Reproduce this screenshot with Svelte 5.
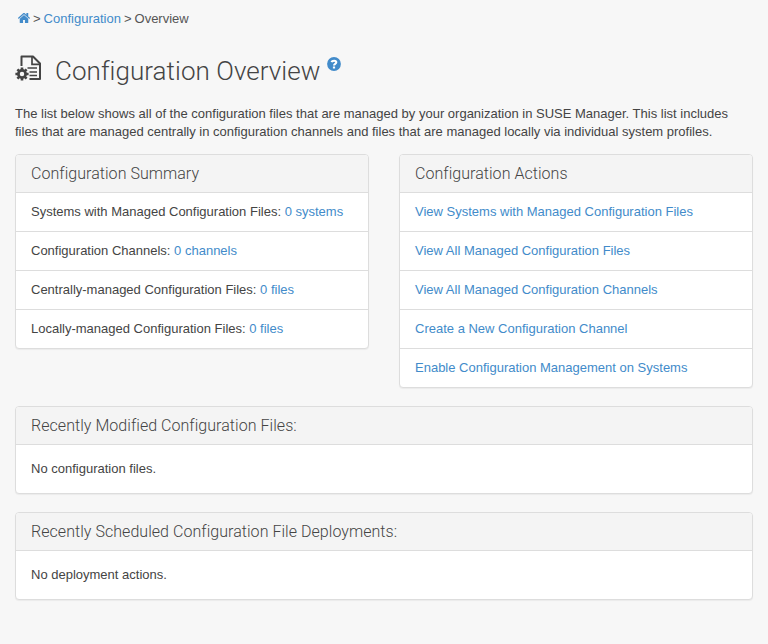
<script>
  const summary = [
    { label: 'Systems with Managed Configuration Files:', link: '0 systems' },
    { label: 'Configuration Channels:', link: '0 channels' },
    { label: 'Centrally-managed Configuration Files:', link: '0 files' },
    { label: 'Locally-managed Configuration Files:', link: '0 files' },
  ];
  const actions = [
    'View Systems with Managed Configuration Files',
    'View All Managed Configuration Files',
    'View All Managed Configuration Channels',
    'Create a New Configuration Channel',
    'Enable Configuration Management on Systems',
  ];
  const recent = [
    { title: 'Recently Modified Configuration Files:', body: 'No configuration files.' },
    { title: 'Recently Scheduled Configuration File Deployments:', body: 'No deployment actions.' },
  ];
</script>

<main>
  <nav>
    <a href="#home" aria-label="Home">
      <svg class="home" viewBox="20 40 1624 1260" width="12" height="10" preserveAspectRatio="none">
        <path fill="currentColor" d="M1408 768v480q0 26-19 45t-45 19H960V928H704v384H320q-26 0-45-19t-19-45V768L832 293zm223-69-62 74q-8 9-21 11h-3q-13 0-21-7L832 200 140 777q-12 8-24 7-13-2-21-11l-62-74q-8-10-7-23.500t11-21.500L756 55q32-26 76-26t76 26l244 204V64q0-14 9-23t23-9h192q14 0 23 9t9 23v408l219 182q10 8 11 21.500t-7 23.500z" />
      </svg>
    </a>
    <span>&gt;</span>
    <a href="#configuration">Configuration</a>
    <span>&gt;</span>
    <span>Overview</span>
  </nav>

  <h1>
    <svg class="doc" viewBox="0 0 27 26" width="27" height="26">
      <path fill="none" stroke="currentColor" stroke-width="2" stroke-linejoin="round" d="M6.500 11V1.500H18L25 8.500V23.900H14.500" />
      <path fill="none" stroke="currentColor" stroke-width="1.700" d="M17 1.500V9.300H25" />
      <path fill="none" stroke="currentColor" stroke-width="1.600" d="M12.500 13H22M14.500 17H22M14.500 20.500H22" />
      <circle cx="7" cy="19" r="3.600" fill="none" stroke="currentColor" stroke-width="2.700" />
      <g stroke="currentColor" stroke-width="2.600">
        <path d="M7 12.400V15M7 23V25.600M.4 19H3M11 19H13.600M2.400 14.400L4.200 16.200M9.800 21.800L11.600 23.600M2.400 23.600L4.200 21.800M9.800 16.200L11.600 14.400" />
      </g>
    </svg>
    <span>Configuration Overview</span>
    <a href="#help" aria-label="Help">
      <svg class="help" viewBox="0 0 14 14" width="14" height="14">
        <circle cx="7" cy="7" r="6.900" fill="currentColor" />
        <path fill="none" stroke="#fff" stroke-width="2.100" d="M4.500 5.200C5.100 3.400 9.200 3 9.300 5.300C9.300 6.900 7 6.800 7 8.500" />
        <path fill="#fff" d="M5.900 9.500h2.200v2H5.900z" />
      </svg>
    </a>
  </h1>

  <p class="intro">
    The list below shows all of the configuration files that are managed by your organization in SUSE Manager. This list includes<br />
    <span>files that are managed centrally in configuration channels and files that are managed locally via individual system profiles.</span>
  </p>

  <div class="columns">
    <section>
      <h2>Configuration Summary</h2>
      <ul>
        {#each summary as item}
          <li>{item.label} <a href="#list">{item.link}</a></li>
        {/each}
      </ul>
    </section>
    <section>
      <h2>Configuration Actions</h2>
      <ul>
        {#each actions as action}
          <li><a href="#action">{action}</a></li>
        {/each}
      </ul>
    </section>
  </div>

  {#each recent as panel}
    <section class="wide">
      <h2>{panel.title}</h2>
      <p>{panel.body}</p>
    </section>
  {/each}
</main>

<style>
  :global(body) {
    margin: 0;
    background: #f7f7f7;
  }
  main {
    box-sizing: border-box;
    min-height: 644px;
    padding: 10px 15px 0;
    color: #444;
    font: 13px/18px 'Liberation Sans', Arial, sans-serif;
  }
  a {
    color: #428bca;
    text-decoration: none;
  }
  nav {
    display: flex;
    gap: 3px;
    height: 18px;
    padding-left: 3px;
    color: #555;
  }
  nav a:first-child {
    display: flex;
    align-items: center;
  }
  .home {
    margin-top: -2px;
  }
  h1 {
    display: flex;
    height: 32px;
    margin: 27px 0 18px;
    font: 300 26px/32px Roboto, sans-serif;
    letter-spacing: 0.05px;
  }
  .doc {
    margin-right: 13px;
  }
  h1 a {
    display: flex;
    margin: 2px 0 0 7px;
  }
  p {
    margin: 0;
  }
  .intro {
    margin-bottom: 13px;
    white-space: nowrap;
  }
  .columns {
    display: grid;
    grid-template-columns: 1fr 1fr;
    gap: 30px;
    align-items: start;
    margin-bottom: 18px;
  }
  section {
    border: 1px solid #ddd;
    border-radius: 4px;
    background: #fff;
    box-shadow: 0 1px 1px rgba(0, 0, 0, 0.05);
    overflow: hidden;
  }
  h2 {
    height: 37px;
    margin: 0;
    padding-left: 15px;
    border-bottom: 1px solid #ddd;
    background: #f4f4f4;
    font: 300 16px/37px Roboto, sans-serif;
    letter-spacing: 0.045px;
  }
  ul {
    margin: 0;
    padding: 0;
    list-style: none;
  }
  li {
    height: 38px;
    padding-left: 15px;
    line-height: 38px;
    white-space: nowrap;
  }
  li + li {
    border-top: 1px solid #ddd;
  }
  .wide {
    margin-bottom: 18px;
  }
  .wide p {
    padding: 15px;
  }
</style>
